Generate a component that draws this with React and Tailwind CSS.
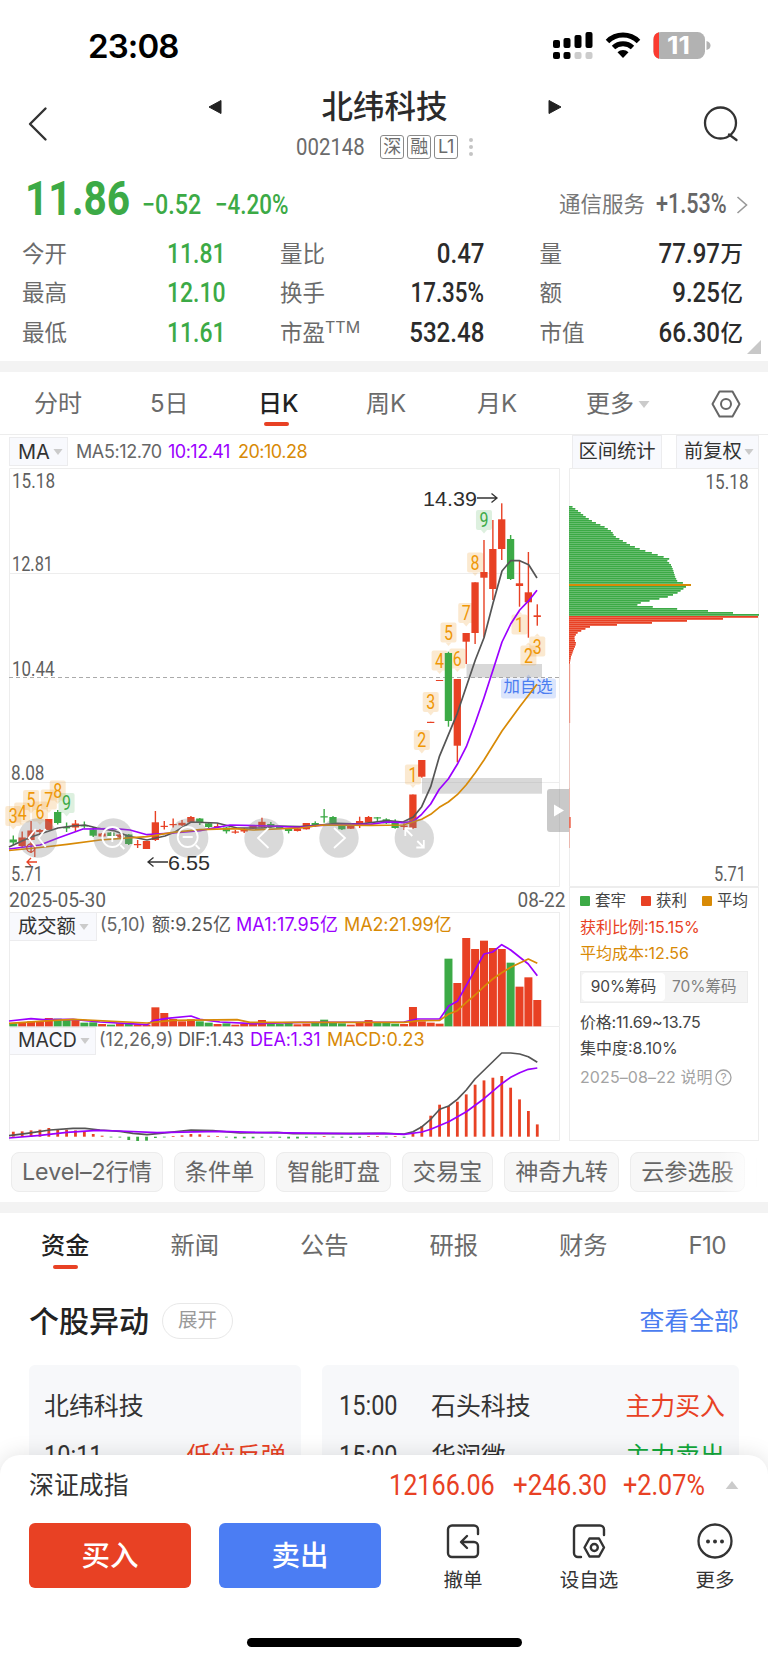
import React from 'react';
import clsx from 'clsx';

const RED = '#e84124';
const GREEN = '#3caa46';
const ORANGE = '#d88a06';
const PURPLE = '#9b00ff';
const DARK = '#555555';

// condensed digits used for all quotes
function Num({ children, className }) {
    return (
        <span className={clsx('inline-block whitespace-nowrap leading-none font-[Roboto,sans-serif]', className)}>
            {children}
        </span>
    );
}

const x = (i) => 13.3 + i * 8.881;

// [color, body top, body bottom, wick top, wick bottom]
const candles = [
    ['g', 839.5, 842.5, 835.5, 845], ['r', 837.5, 846, 831.5, 847], ['r', 830.5, 840, 821, 853], ['r', 830, 832, 829, 835],
    ['r', 819, 830, 819, 830], ['g', 812, 823, 810, 824.5], ['g', 827, 828.4, 822.5, 832], ['r', 823.5, 827.5, 820, 832],
    ['g', 825, 826.5, 821.5, 828.5], ['g', 829.5, 835.7, 827, 837], ['r', 833.5, 836.5, 833, 837], ['g', 832.5, 836.5, 832, 837],
    ['r', 834.5, 837.5, 834, 838], ['g', 834.5, 844, 834, 845], ['r', 844, 845.2, 840, 848], ['r', 841, 849, 841, 849],
    ['r', 822.3, 840, 811, 841], ['r', 825.8, 827, 821, 829.5], ['r', 824, 825.2, 818.5, 827.5], ['r', 822.8, 825.3, 820, 826],
    ['r', 817, 822.5, 816, 823], ['g', 818.5, 822.5, 818, 825], ['g', 823.3, 827, 823, 828], ['r', 826, 827.3, 823.5, 828],
    ['g', 827.5, 831.3, 827, 833.5], ['r', 831.5, 832.7, 830, 833.7], ['r', 828.7, 831.5, 828, 833], ['r', 826, 828.7, 825, 829],
    ['r', 821.8, 827.3, 817.7, 828], ['g', 824, 827.3, 822, 828], ['g', 826, 828.7, 826, 829], ['g', 828.7, 831, 828, 833.4],
    ['r', 828.7, 831, 828, 831.5], ['r', 823, 829.3, 823, 829.5], ['g', 823, 825, 821.3, 827], ['g', 816.2, 817.5, 809, 822.7],
    ['g', 817, 823.5, 816, 824], ['g', 825.3, 829.3, 825, 830], ['r', 826, 828.7, 826, 829], ['r', 821, 824, 816.7, 828],
    ['r', 817, 822.7, 816, 823], ['g', 817.3, 818.5, 817, 822], ['g', 819.3, 823.3, 818.3, 824], ['g', 821.7, 828, 819.3, 828.7],
    ['r', 825.5, 827, 823.3, 830], ['r', 794.5, 828, 794.5, 829], ['r', 760, 776.7, 760, 777.7], ['r', 721.8, 723, 721.8, 723],
    ['r', 680, 681, 680, 681], ['g', 653, 721, 651.7, 726.7], ['r', 679, 745.7, 679, 762.3], ['r', 633, 641.7, 633, 664],
    ['r', 582.3, 633, 582.3, 644], ['r', 572, 577.7, 540, 637.7], ['r', 549, 589, 520, 600], ['r', 519.3, 549, 503.3, 560],
    ['g', 539, 579, 535, 580], ['r', 583.3, 586, 560, 606.7], ['r', 592.3, 602.3, 552, 637.7], ['r', 615.3, 617, 604.3, 625.7],
];

const ma5 = '9,847 22,841 31,837 43,833 58,828 72,826 85,825 97,828 115,831 128,836 147,840 165,836 175,832 191,822 217,823 237,828 263,828 277,826 300,826.7 320,825 337,823.3 360,824 387,820.7 403,822 413.3,817 421.7,806.7 430.7,786.7 439.3,756.7 457.3,713.3 475.3,660 484,637.7 493,603.3 502,571 510.7,560.7 519.7,560.7 528.7,564.7 537,578';
const ma10 = '9,849 40,845 58,838 83,829 115,828.7 130,830 147,834.7 173,833 200,830.7 230,825 270,826 300,827.3 320,825.3 353,824.3 370,824.3 387,822 403,822.7 413,821.5 421.7,814.3 430.7,804 439.3,789.3 448.3,779 457.3,764.3 466.3,746.7 475.3,722.7 484,697.7 493,670 502,642 510.7,624 519.7,610 528.7,600.7 537,590.3';
const ma20 = '9,850.5 40,847.5 67,844.3 100,840 147,836.7 173,832.3 200,829.7 233,828.7 253,830 300,828 323,825 370,825.3 403,825 421.7,819.3 430.7,814.3 439.3,807.3 448.3,802 457.3,794.7 466.3,784.7 475.3,772.7 484,760 502,731 519.7,706.7 537,684.3';

// [index, box top, digit, color, pointer up]
const marks = [
    [0, 806, 3], [1, 802.5, 4], [2, 790, 5], [3, 801.5, 6], [4, 789.5, 7], [5, 780.5, 8], [6, 793, 9, 'g'],
    [45, 764.5, 1], [46, 730, 2], [47, 692, 3], [48, 650.5, 4], [49, 622.5, 5], [50, 648.5, 6], [51, 603, 7], [52, 552.5, 8], [53, 510, 9, 'g'],
    [57, 614.5, 1, 'o', true], [58, 645.5, 2, 'o', true], [59, 636.5, 3, 'o', true],
];

const volTops = [
    400, 396, 394, 394, 384, 386, 387, 388, 398, 397, 402, 404, 400, 402, 403, 404, 352, 369, 387, 394,
    388, 394, 398, 402, 400, 404, 402, 398, 390, 399, 402, 398, 403, 401, 398, 389, 396, 400, 404, 398,
    390, 399, 399, 401, 402, 351, 394, 398, 401, 206, 279, 144, 177, 152, 174, 177, 218, 290, 262, 330,
];
const volMa1 = '9,1021 31,1018.7 43,1019.7 73,1019.3 100,1022 147,1024.7 153,1020.7 167,1018.3 191,1016 200,1019.3 220,1022 253,1023.7 300,1022.3 404,1022 417,1019 439.7,1019 448.7,1006 457.3,1001.3 484,954 492.7,952 501.7,944.7 510.7,950 528.3,964 537.3,975.7';
const volMa2 = '9,1023.3 50,1020.7 73,1019.3 147,1023 173,1020.3 237,1019.7 250,1022.3 404,1022.3 420,1020.7 439.7,1020.3 448.7,1014 457.3,1010.7 466.3,1002.3 475,995 484,986.7 492.7,979 501.7,972.7 510.7,967.3 528.3,959 537.3,963.3';

// histogram heights, positive is red
const macd = [
    5, 5.3, 6.3, 7, 8.7, 7.3, 7, 6.3, 5.3, 2.7, 1, -0.7, -0.8, -3.3, -4.3, -4, -1.3, -0.7, 0.7, 1.3,
    2.7, 2.4, 1, 0.7, -0.8, -1.6, -1.6, -1.6, -1, -0.8, -1, -1.8, -1.8, -1, -0.7, 0.7, -0.7, -1, -1.2, -1,
    0.7, 0.7, -0.6, 0.7, -1, 4, 10.7, 21, 32, 30.7, 35, 42.3, 52, 56.3, 59, 60.7, 49, 37.3, 25.7, 12.3,
];
const dif = '9,1135.7 27,1133.3 50,1130 73,1128.3 85,1128.3 100,1130 120,1131.3 133,1133.3 147,1134.7 160,1133.3 191,1130 213,1130.7 240,1133 277,1132.3 293,1133.7 384,1133.3 404,1134 413,1131.7 422,1126.7 430.7,1119.3 439.7,1109.3 448.7,1106 457.3,1099.3 466.3,1090 475,1079 501.7,1053 510.7,1053 519.7,1054 528.3,1056.7 537.3,1062.3';
const dea = '9,1138 40,1135.3 67,1132.3 97,1130.3 120,1131 157,1132.7 220,1131.3 267,1132.7 350,1133.7 384,1133.3 404,1134.3 422,1132 430.7,1129.3 448.7,1121.7 466.3,1111.7 484,1098.7 501.7,1083.7 510.7,1077.3 519.7,1072.7 528.3,1069.3 537.3,1068';

// cost distribution outline: [y, width]
const chipShape = [
    [506, 2], [511.7, 10], [517.3, 17], [521.7, 24], [526.7, 35], [531.7, 43], [536, 45], [540, 52], [545, 61], [550, 73], [554, 86],
    [556.7, 93], [558.3, 101], [560.7, 98], [565, 102], [570, 104], [576.7, 106], [581.7, 108.5], [585, 122], [587, 117], [590, 113],
    [593.3, 108], [596.7, 100], [600, 86], [602, 75], [604.7, 66], [607.3, 86], [609.3, 112], [611, 139], [613, 164], [615, 190],
    [617, 189], [619, 154], [621, 118], [623, 83], [625, 48], [627, 21], [630, 14], [633.3, 8], [636.7, 5.5], [640, 5.5],
    [643.3, 7], [646.7, 6], [650, 4.5], [656.7, 2], [662, 1],
];

function chipWidth(y) {
    for (let i = 1; i < chipShape.length; i++) {
        const [y1, w1] = chipShape[i];
        if (y <= y1) {
            const [y0, w0] = chipShape[i - 1];
            return w0 + ((w1 - w0) * (y - y0)) / (y1 - y0);
        }
    }
    return 1;
}

const chipRows = Array.from({ length: 79 }, (_, i) => 507 + i * 2);

function Label({ x, y, w, children, size = 20 }) {
    return (
        <text x={x} y={y} fontSize={size} textLength={w} lengthAdjust="spacingAndGlyphs" fill="#5f5f5f" fontFamily="Roboto">
            {children}
        </text>
    );
}

function Mark({ cx, top, digit, color, up }) {
    const green = color === 'g';
    const d = up
        ? `M${cx - 3} ${top} l3 -3 l3 3z`
        : `M${cx - 3} ${top + 20} l3 3.5 l3 -3.5z`;
    return (
        <g>
            <g fill={green ? '#3caa46' : '#f0a030'} opacity={green ? 0.17 : 0.22}>
                <rect x={cx - 8} y={top} width="16" height="20" rx="2" />
                <path d={d} />
            </g>
            <text x={cx - 4.5} y={top + 17} fontSize="19.5" textLength="9" lengthAdjust="spacingAndGlyphs" fill={green ? GREEN : '#ef9706'} fontFamily="Roboto">{digit}</text>
        </g>
    );
}

function ToolCircle({ cx, children }) {
    return (
        <g transform={`translate(${cx} 838)`} fill="none" stroke="#fff" strokeWidth="1.8">
            <circle r="19.7" fill="#808080" fillOpacity="0.3" stroke="none" />
            {children}
        </g>
    );
}

function KLine() {
    return (
        <svg width="569" height="444" viewBox="0 468 569 444" className="block shrink-0">
            <g stroke="#ededed" fill="none">
                <path d="M9.5 912V468.5H559.5V886.5H9.5M9.5 573.5H559M9.5 782.5H559" />
                <path d="M9 677.5H559" stroke="#aaa" strokeDasharray="4 3" />
            </g>
            <rect x="466.5" y="664" width="75.5" height="13.5" fill="#999" opacity="0.38" />
            <rect x="422" y="778" width="120" height="15.7" fill="#999" opacity="0.38" />
            <path d="M503 678.5h22l3.5 -4l3.5 4h21.5a2.5 2.5 0 0 1 2.5 2.5v15a2.5 2.5 0 0 1 -2.5 2.5h-50a2.5 2.5 0 0 1 -2.5 -2.5v-15a2.5 2.5 0 0 1 2 -2.5z" fill="#4b7df0" opacity="0.2" />
            <text x="503.5" y="692" fontSize="16.4" fill="#4b7df0">加自选</text>
            {marks.map(([i, top, digit, color, up], k) => (
                <Mark key={k} cx={x(i)} top={top} digit={digit} color={color} up={up} />
            ))}
            {candles.map(([c, t, b, wt, wb], i) => (
                <g key={i} fill={c === 'r' ? RED : GREEN}>
                    <rect x={x(i) - 3.7} y={t} width="7.3" height={b - t} />
                    <rect x={x(i) - 0.7} y={wt} width="1.4" height={wb - wt} />
                </g>
            ))}
            <g fill="none" strokeWidth="1.7" strokeLinejoin="round">
                <polyline points={ma5} stroke={DARK} />
                <polyline points={ma10} stroke={PURPLE} />
                <polyline points={ma20} stroke={ORANGE} />
            </g>
            <g fill="none" stroke={RED} strokeWidth="1.3">
                <circle cx="30.7" cy="848" r="4" />
                <path d="M34.8 845V857M37 862H27M31 858L27 862L31 866" />
            </g>
            <ToolCircle cx={37.7}><path d="M-2 -9L-9 0L-2 9M8 -9L1 0L8 9" /></ToolCircle>
            <ToolCircle cx={113.3}><circle r="10" cx="-1" cy="-1" /><path d="M7 7L11 11M-6 -1H4M-1 -6V4" /></ToolCircle>
            <ToolCircle cx={188.7}><circle r="10" cx="-1" cy="-1" /><path d="M7 7L11 11M-6 -1H4" /></ToolCircle>
            <ToolCircle cx={264}><path d="M4.5 -10L-6 0L4.5 10" /></ToolCircle>
            <ToolCircle cx={339}><path d="M-5 -10L6 0L-5 10" /></ToolCircle>
            <ToolCircle cx={414.3}><path d="M-9 -9L-2 -2M-9 -2V-9.5H-2M9 9L3 3M9.5 2V9.5H2" /></ToolCircle>
            <Label x={12} y={488} w={43}>15.18</Label>
            <Label x={12} y={571} w={41}>12.81</Label>
            <Label x={12} y={676} w={42.5}>10.44</Label>
            <Label x={11} y={780} w={33.5}>8.08</Label>
            <Label x={11} y={881} w={32}>5.71</Label>
            <g fill="#2f2f2f" fontFamily="Liberation Sans" fontSize="21">
                <text x="423" y="505.5" textLength="54" lengthAdjust="spacingAndGlyphs">14.39</text>
                <text x="168" y="870" textLength="42" lengthAdjust="spacingAndGlyphs">6.55</text>
            </g>
            <path d="M477 498H497M491.5 493.5L497 498L491.5 502.5M168 862H148M153.5 857.5L148 862L153.5 866.5" stroke="#333" strokeWidth="1.3" fill="none" />
            <Label x={9} y={906.5} w={97}>2025-05-30</Label>
            <Label x={517.5} y={906.5} w={48}>08-22</Label>
            <path d="M569 789H550a3 3 0 0 0 -3 3v37a3 3 0 0 0 3 3H569z" fill="#888" opacity="0.45" />
            <path d="M554 804.5L564 810.5L554 816.5z" fill="#fff" />
        </svg>
    );
}

function CostChart() {
    return (
        <svg width="199" height="419" viewBox="569 468 199 419" className="block shrink-0">
            <path d="M569.5 468.5H758.5V886.5H569.5z" fill="none" stroke="#ededed" />
            {chipRows.map((y) => (
                <g key={y} fill={y < 616 ? GREEN : RED}>
                    <rect x="569" y={y - 1} width={chipWidth(y)} height="2" opacity="0.72" />
                    <rect x="569" y={y - 1} width={chipWidth(y)} height="1.2" />
                </g>
            ))}
            <rect x="569" y="584" width="122" height="2" fill={ORANGE} />
            <rect x="569" y="664" width="1.2" height="59" fill={RED} opacity="0.5" />
            <rect x="569" y="723" width="1" height="65" fill={RED} opacity="0.2" />
            <rect x="569" y="788" width="1" height="60" fill={RED} opacity="0.3" />
            <rect x="569" y="817" width="2" height="11" fill={RED} opacity="0.6" />
            <Label x={705.5} y={488.5} w={43}>15.18</Label>
            <Label x={714} y={881} w={32}>5.71</Label>
        </svg>
    );
}

function VolumeChart() {
    return (
        <svg width="560" height="86" viewBox="0 941 560 86" className="block overflow-visible">
            <path d="M9.5 941V1026.5H559.5V913" fill="none" stroke="#ededed" />
            {volTops.map((t, i) => (
                <rect key={i} x={x(i) - 4} y={890 + t / 3} width="8" height={(409 - t) / 3} fill={candles[i][0] === 'r' ? RED : GREEN} />
            ))}
            <g fill="none" strokeWidth="1.7" strokeLinejoin="round">
                <polyline points={volMa1} stroke={PURPLE} />
                <polyline points={volMa2} stroke={ORANGE} />
            </g>
        </svg>
    );
}

function MacdChart() {
    return (
        <svg width="560" height="90" viewBox="0 1052 560 90" className="block overflow-visible">
            <path d="M9.5 1055V1140.5H559.5V1027" fill="none" stroke="#ededed" />
            {macd.map((h, i) => (
                <rect key={i} x={x(i) - 1.4} y={h > 0 ? 1136.7 - h : 1136.7} width="2.8" height={Math.abs(h)} fill={h > 0 ? RED : GREEN} />
            ))}
            <g fill="none" strokeWidth="1.7" strokeLinejoin="round">
                <polyline points={dif} stroke={DARK} />
                <polyline points={dea} stroke={PURPLE} />
            </g>
        </svg>
    );
}

function Caret({ className }) {
    return <svg viewBox="0 0 12 7" className={clsx('shrink-0', className)}><path d="M0.5 0H11.5L6 7z" fill="#cbcbcb" /></svg>;
}

function StatusBar() {
    return (
        <div className="flex h-[78px] items-start pl-[88px] pr-[56px] pt-[29px]">
            <div className="text-[33px] font-semibold leading-[34px] tracking-[-0.9px] text-black">23:08</div>
            <svg width="160" height="32" viewBox="552 29 160 32" className="ml-auto">
                <g fill="#000">
                    <rect x="553" y="40" width="7" height="8" rx="2" />
                    <rect x="563.5" y="38" width="7" height="10" rx="2" />
                    <rect x="574.5" y="35" width="7" height="13" rx="2" />
                    <rect x="585.5" y="32" width="7" height="16" rx="2" />
                    <rect x="553" y="52" width="7" height="7" rx="2" />
                    <rect x="563.5" y="52" width="7" height="7" rx="2" />
                </g>
                <rect x="574.5" y="52" width="7" height="7" rx="2" fill="#ccc" />
                <rect x="585.5" y="52" width="7" height="7" rx="2" fill="#ccc" />
                <g fill="none" stroke="#000" strokeWidth="5">
                    <path d="M607.5 41.5a22 22 0 0 1 31 0" />
                    <path d="M613.5 47.5a14 14 0 0 1 19 0" />
                </g>
                <path d="M617.5 52.3a8 8 0 0 1 11 0l-5.5 5.7z" fill="#000" />
                <rect x="653.5" y="32" width="51.5" height="27" rx="7.5" fill="#b2b2b2" />
                <path d="M659 32.2a7.5 7.5 0 0 0 -5.5 7.3v12a7.5 7.5 0 0 0 5.5 7.3z" fill="#fb3b30" />
                <path d="M706.5 41q4 1 4 4.5t-4 4.5z" fill="#b2b2b2" />
                <text x="667" y="54" fontSize="24" fontWeight="700" fill="#fff" textLength="23" lengthAdjust="spacingAndGlyphs">11</text>
            </svg>
        </div>
    );
}

function Header() {
    return (
        <div className="flex h-[92px] justify-between pl-[27px] pr-[29px]">
            <svg width="22" height="36" viewBox="0 0 22 36" className="mt-[28px]" fill="none" stroke="#333" strokeWidth="2.4" strokeLinejoin="round" strokeLinecap="round">
                <path d="M18.5 2.5L3 18L18.5 33.5" />
            </svg>
            <div className="ml-[17px] flex flex-col items-center">
                <div className="flex items-center pt-[11px]">
                    <svg width="14" height="16" viewBox="0 0 14 16"><path d="M13 1.5v13L1 8z" fill="#222" stroke="#222" strokeLinejoin="round" /></svg>
                    <div className="w-[326px] text-center text-[31.5px] font-medium leading-[36px] text-[#2b2b2b]">北纬科技</div>
                    <svg width="14" height="16" viewBox="0 0 14 16"><path d="M1 1.5v13L13 8z" fill="#222" stroke="#222" strokeLinejoin="round" /></svg>
                </div>
                <div className="mt-[10px] flex h-[23px] items-center gap-[3px] text-[#6b6b6b]">
                    <Num className="w-[81px] origin-left scale-x-85 text-2xl">002148</Num>
                    {['深', '融', 'L1'].map((t) => (
                        <span key={t} className="flex size-6 items-center justify-center rounded-[3px] border border-[#8a8a8a] text-[18px] leading-none tracking-tight">{t}</span>
                    ))}
                    <svg width="4" height="18" viewBox="0 0 4 18" className="ml-2" fill="#c4c4c4">
                        <circle cx="2" cy="2" r="2" /><circle cx="2" cy="9" r="2" /><circle cx="2" cy="16" r="2" />
                    </svg>
                </div>
            </div>
            <svg width="36" height="36" viewBox="0 0 36 36" className="mt-[28px]" fill="none" stroke="#333" strokeWidth="2.3" strokeLinecap="round">
                <circle cx="17.5" cy="17" r="15.5" /><path d="M26 28.5L33.5 34" />
            </svg>
        </div>
    );
}

const stats = [
    ['今开', '11.81', '量比', '0.47', '量', '77.97', '万'],
    ['最高', '12.10', '换手', '17.35%', '额', '9.25', '亿'],
    ['最低', '11.61', '市盈', '532.48', '市值', '66.30', '亿'],
];

function Quote() {
    return (
        <div className="h-[191px]">
            <div className="flex h-[63px] items-end text-[#3caa46]">
                <Num className="ml-[25px] w-[117px] origin-left scale-x-83 pb-[10px] text-[49px] font-bold">11.86</Num>
                <Num className="w-[73px] origin-left scale-x-83 pb-[14px] text-[28px] font-medium">−0.52</Num>
                <Num className="origin-left scale-x-80 pb-[14px] text-[28px] font-medium">−4.20%</Num>
                <div className="ml-auto flex items-center pb-[15px] text-[21.5px] leading-none text-[#777]">
                    通信服务
                    <Num className="ml-[11px] w-[80px] origin-left scale-x-80 text-[27px] font-medium text-[#666]">+1.53%</Num>
                    <svg width="12" height="18" viewBox="0 0 12 18" className="mr-[20px]" fill="none" stroke="#999" strokeWidth="1.6"><path d="M1.5 1L10.5 9L1.5 17" /></svg>
                </div>
            </div>
            <div className="relative pt-px">
                {stats.map(([a, av, b, bv, c, cv, unit]) => (
                    <div key={a} className="flex h-[39.5px] items-center text-[22.5px] leading-none text-[#6b6b6b]">
                        <span className="ml-[22px] w-[145px]">{a}</span>
                        <Num className="w-[113px] origin-left scale-x-82 text-[28px] font-medium text-[#3caa46]">{av}</Num>
                        <span>{b}</span>
                        {b === '市盈' && <span className="mb-3 text-[16px] leading-none">TTM</span>}
                        <Num className={clsx('ml-auto origin-right text-right text-[28px] font-medium text-[#2b2b2b]', b === '换手' ? 'scale-x-80' : 'scale-x-86')}>{bv}</Num>
                        <span className="ml-[55px] w-[52px]">{c}</span>
                        <Num className="w-[129px] origin-right scale-x-86 text-right text-[28px] font-medium text-[#2b2b2b]">{cv}</Num>
                        <span className="mr-[25px] font-medium text-[#2b2b2b]">{unit}</span>
                    </div>
                ))}
                <svg width="14" height="14" className="absolute right-[7px] top-[107px]"><path d="M14 0V14H0z" fill="#c8c8c8" /></svg>
            </div>
        </div>
    );
}

function PeriodTabs() {
    return (
        <div className="flex h-[63px] items-center border-b border-[#ededed] pl-[34px] pt-[2px] text-[24px] leading-none text-[#6b6b6b]">
            <span className="w-[116px]">分时</span>
            <span className="w-[108px]">5日</span>
            <span className="relative w-[108px] font-medium text-[#222]">
                日K
                <i className="absolute left-[6px] top-[30px] h-1 w-[25px] rounded-full bg-[#e84124]" />
            </span>
            <span className="w-[111px]">周K</span>
            <span className="w-[109px]">月K</span>
            <span>更多</span>
            <Caret className="ml-1 h-[7px] w-3" />
            <svg width="30" height="28" viewBox="0 0 30 28" className="ml-auto mr-[27px]" fill="none" stroke="#666" strokeWidth="2" strokeLinejoin="round">
                <path d="M8.5 1.5H21.5L28.5 14L21.5 26.5H8.5L1.5 14z" /><circle cx="15" cy="14" r="5" />
            </svg>
        </div>
    );
}

const selector = 'flex items-center border border-[#ececee] bg-[#f8f9fd] leading-none text-[#333]';

function Charts() {
    return (
        <div>
            <div className="flex h-[33px] items-start text-[18px] leading-none">
                <div className={clsx(selector, 'ml-[9px] mt-[2px] h-[29px] w-[59px] pl-2 text-[20px]')}>MA<Caret className="ml-[3px] h-[6px] w-[10px]" /></div>
                <div className="ml-2 mt-[8px] flex gap-[7px]">
                    <span className="w-[85px] tracking-[-0.4px] text-[#666]">MA5:12.70</span>
                    <span className="w-[63px] tracking-[-0.5px] text-[#9b00ff]">10:12.41</span>
                    <span className="w-[80px] tracking-[-0.5px] text-[#d88a06]">20:10.28</span>
                </div>
                <div className={clsx(selector, 'ml-auto h-[34px] w-[90px] justify-center text-[19.3px]')}>区间统计</div>
                <div className={clsx(selector, 'ml-[14px] mr-[9px] h-[34px] w-[83px] pl-[7px] text-[19.3px]')}>前复权<Caret className="ml-[2px] h-[6px] w-[10px]" /></div>
            </div>
            <div className="flex h-[674px]">
                <div className="flex w-[569px] shrink-0 flex-col">
                    <KLine />
                    <div className="flex h-[29px] items-start text-[18px] leading-none">
                        <div className={clsx(selector, 'ml-[9px] h-[29px] w-[88px] pl-[8px] text-[19.3px]')}>成交额<Caret className="ml-[3px] h-[6px] w-[10px]" /></div>
                        <div className="flex h-full flex-1 items-start whitespace-nowrap border-t border-[#ededed] pl-[3px] pt-[3px]">
                            <span className="w-[52px] text-[#666]">(5,10)</span>
                            <span className="w-[84px] text-[#555]">额:9.25亿</span>
                            <span className="w-[108px] tracking-[0.1px] text-[#9b00ff]">MA1:17.95亿</span>
                            <span className="tracking-[-0.1px] text-[#d88a06]">MA2:21.99亿</span>
                        </div>
                        <div className="w-[9px]" />
                    </div>
                    <VolumeChart />
                    <div className="flex h-[25px] items-start text-[18px] leading-none">
                        <div className={clsx(selector, 'relative ml-[9px] h-[28px] w-[87px] pl-[8px] text-[19.5px]')}>MACD<Caret className="ml-[3px] h-[6px] w-[10px]" /></div>
                        <div className="flex flex-1 items-start pl-[3px] pt-[4px]">
                            <span className="w-[79px] text-[#666]">(12,26,9)</span>
                            <span className="w-[72px] tracking-[-0.4px] text-[#555]">DIF:1.43</span>
                            <span className="w-[77px] tracking-[-0.2px] text-[#9b00ff]">DEA:1.31</span>
                            <span className="text-[#d88a06]">MACD:0.23</span>
                        </div>
                    </div>
                    <MacdChart />
                </div>
                <div className="flex w-[199px] flex-col">
                    <CostChart />
                    <div className="flex h-[254px] w-[190px] flex-col border border-[#ededed] pl-[10px] text-[16px] leading-none text-[#444]">
                        <div className="mt-[5px] flex gap-[15px] text-[15.5px]">
                            <span className="flex items-center gap-[5px]"><i className="size-[10px] rounded-[1px] bg-[#3caa46]" />套牢</span>
                            <span className="flex items-center gap-[5px]"><i className="size-[10px] rounded-[1px] bg-[#e84124]" />获利</span>
                            <span className="flex items-center gap-[5px]"><i className="size-[10px] rounded-[1px] bg-[#d88a06]" />平均</span>
                        </div>
                        <div className="mt-[10px] text-[#e84124]">获利比例:15.15%</div>
                        <div className="mt-[10px] text-[#d88a06]">平均成本:12.56</div>
                        <div className="mt-[10px] flex h-8 w-[168px] items-center border border-[#ececec] bg-[#f4f4f4] p-px text-[15.5px]">
                            <span className="flex h-[28px] w-[83px] items-center justify-center rounded-sm bg-white">90%筹码</span>
                            <span className="flex flex-1 items-center pl-[7px] text-[#808080]">70%筹码</span>
                        </div>
                        <div className="mt-[11px] tracking-[-0.2px]">价格:11.69~13.75</div>
                        <div className="mt-[10px]">集中度:8.10%</div>
                        <div className="mt-[13px] flex items-center whitespace-nowrap tracking-[0.1px] text-[#a3a3a3]">
                            2025–08–22 说明
                            <svg width="17" height="17" viewBox="0 0 17 17" className="ml-[2px]">
                                <circle cx="8.5" cy="8.5" r="7.5" fill="none" stroke="#a3a3a3" strokeWidth="1.3" />
                                <text x="8.5" y="12.7" fontSize="12" textAnchor="middle" fill="#a3a3a3">?</text>
                            </svg>
                        </div>
                    </div>
                </div>
            </div>
        </div>
    );
}

const chips = [
    ['Level–2行情', 'w-[152px]'],
    ['条件单', 'w-[91px]'],
    ['智能盯盘', 'w-[115px]'],
    ['交易宝', 'w-[91px]'],
    ['神奇九转', 'w-[115px]'],
    ['云参选股', 'w-[115px]'],
    ['', 'w-[91px]'],
];

function Chips() {
    return (
        <div className="relative h-[60px] overflow-hidden">
            <div className="ml-[11px] mt-[10px] flex gap-[11px]">
                {chips.map(([t, w]) => (
                    <span key={w + t} className={clsx('flex h-[40px] shrink-0 items-center justify-center whitespace-nowrap rounded-lg border border-[#ececec] bg-[#f7f7f7] pt-px text-[23.2px] leading-none text-[#666]', w)}>{t}</span>
                ))}
            </div>
            <div className="absolute right-0 top-0 h-full w-[50px] bg-linear-to-r from-white/0 to-white to-80%" />
        </div>
    );
}

function InfoTabs() {
    return (
        <div className="flex h-[66px] items-center pb-px pl-[41px] text-[24.3px] leading-none text-[#6b6b6b]">
            <span className="relative w-[129.5px] shrink-0 font-medium text-[#222]">
                资金
                <i className="absolute left-[12px] top-[32px] h-1 w-[25px] rounded-full bg-[#e84124]" />
            </span>
            {['新闻', '公告', '研报', '财务'].map((t) => (
                <span key={t} className="w-[129.5px] shrink-0">{t}</span>
            ))}
            <span className="tracking-[-0.8px]">F10</span>
        </div>
    );
}

function Moves() {
    return (
        <div className="h-[176px] overflow-hidden">
            <div className="flex h-[86px] items-center pb-[2px] pl-[29px] pr-[29px] leading-none">
                <span className="text-[30px] font-medium text-[#222]">个股异动</span>
                <span className="ml-[13px] flex h-9 w-[71px] items-center justify-center rounded-full border border-[#e8e8e8] text-[19.5px] text-[#999]">展开</span>
                <span className="ml-auto text-[24.9px] text-[#4b7df0]">查看全部</span>
            </div>
            <div className="flex h-[90px] gap-[21px] overflow-hidden px-[29px] text-[24.9px] leading-none text-[#333]">
                <div className="w-[272px] shrink-0 rounded-t-md bg-[#f7f8fa] px-[15px] pt-[16px]">
                    <div className="flex h-[50px] items-center">北纬科技</div>
                    <div className="flex h-[50px] items-center justify-between">
                        <Num className="origin-left scale-x-84 text-[28px]">10:11</Num>
                        <span className="text-[#e84124]">低位反弹</span>
                    </div>
                </div>
                <div className="flex-1 rounded-t-md bg-[#f7f8fa] pl-[17px] pr-[14px] pt-[16px]">
                    <div className="flex h-[50px] items-center">
                        <Num className="w-[92px] origin-left scale-x-84 text-[28px]">15:00</Num>
                        <span>石头科技</span>
                        <span className="ml-auto text-[#e84124]">主力买入</span>
                    </div>
                    <div className="flex h-[50px] items-center">
                        <Num className="w-[92px] origin-left scale-x-84 text-[28px]">15:00</Num>
                        <span>华润微</span>
                        <span className="ml-auto text-[#12a83c]">主力卖出</span>
                    </div>
                </div>
            </div>
        </div>
    );
}

function TradeBar() {
    return (
        <div className="relative h-[207px] rounded-t-[20px] bg-white shadow-[0_0_22px_rgba(0,0,0,0.12)]">
            <div className="flex h-[60px] items-center pl-[29px] leading-none">
                <span className="w-[100px] text-[24.9px] text-[#333]">深证成指</span>
                <Num className="ml-[260px] w-[124px] origin-left scale-x-84 text-[30px] text-[#e84124]">12166.06</Num>
                <Num className="w-[110px] origin-left scale-x-86 text-[30px] text-[#e84124]">+246.30</Num>
                <Num className="w-[102px] origin-left scale-x-84 text-[30px] text-[#e84124]">+2.07%</Num>
                <Caret className="h-2 w-[14px] rotate-180" />
            </div>
            <div className="flex pl-[29px] pt-[8px] text-[19.5px] leading-none text-[#333]">
                <div className="flex h-[65px] w-[162px] items-center justify-center rounded-md bg-[#e84124] pt-[2px] text-[28.5px] font-medium text-white">买入</div>
                <div className="ml-[28px] flex h-[65px] w-[162px] items-center justify-center rounded-md bg-[#4b7df3] pt-[2px] text-[28.5px] font-medium text-white">卖出</div>
                <div className="ml-[52px] flex w-[60px] flex-col items-center">
                    <svg width="34" height="36" viewBox="0 0 34 36" fill="none" stroke="#333" strokeWidth="2.4" strokeLinecap="round" strokeLinejoin="round">
                        <path d="M32 11V6.5a4 4 0 0 0 -4 -4H6a4 4 0 0 0 -4 4V30a4 4 0 0 0 4 4H28a4 4 0 0 0 4 -4V23a4 4 0 0 0 -4 -4H16M21 13L15 19L21 25" />
                    </svg>
                    <span className="mt-[12px]">撤单</span>
                </div>
                <div className="ml-[66px] flex w-[60px] flex-col items-center">
                    <svg width="34" height="36" viewBox="0 0 34 36" fill="none" stroke="#333" strokeWidth="2.4" strokeLinecap="round" strokeLinejoin="round">
                        <path d="M32 12V6.5a4 4 0 0 0 -4 -4H6a4 4 0 0 0 -4 4V30a4 4 0 0 0 4 4H9" />
                        <path d="M17.5 15.5H27L32 24.5L27 33.5H17.5L12.5 24.5z" /><circle cx="22.3" cy="24.5" r="3.5" />
                    </svg>
                    <span className="mt-[12px]">设自选</span>
                </div>
                <div className="ml-[66px] flex w-[60px] flex-col items-center">
                    <svg width="36" height="36" viewBox="0 0 36 36" fill="none" stroke="#333" strokeWidth="2.3">
                        <circle cx="18" cy="18" r="16.5" />
                        <g fill="#333" stroke="none"><circle cx="11" cy="18.5" r="2" /><circle cx="18" cy="18.5" r="2" /><circle cx="25" cy="18.5" r="2" /></g>
                    </svg>
                    <span className="mt-[12px]">更多</span>
                </div>
            </div>
            <div className="mx-auto mt-[47px] h-[9px] w-[275px] rounded-full bg-black" />
        </div>
    );
}

function App() {
    return (
        <div className="h-[1662px] w-[768px] overflow-hidden bg-white font-[Inter,'Noto_Sans_CJK_SC',sans-serif]">
            <StatusBar />
            <Header />
            <Quote />
            <div className="h-[11px] bg-[#f3f3f3]" />
            <PeriodTabs />
            <Charts />
            <Chips />
            <div className="h-[11px] bg-[#f3f3f3]" />
            <InfoTabs />
            <Moves />
            <TradeBar />
        </div>
    );
}

export default App;
